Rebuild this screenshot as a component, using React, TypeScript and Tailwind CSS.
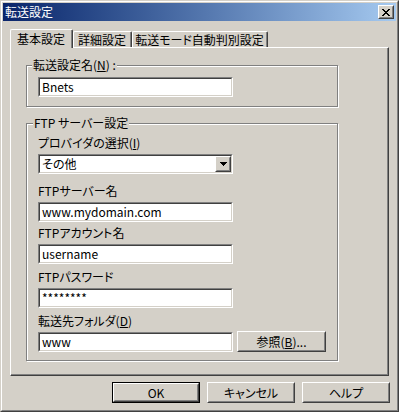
import React from "react";

const Sunken = ({ className = "", children }: { className?: string; children?: React.ReactNode }) => (
  <div className={"border border-t-[#808080] border-l-[#808080] border-r-white border-b-white " + className}>
    <div className="h-full w-full border border-t-[#404040] border-l-[#404040] border-r-[#d4d0c8] border-b-[#d4d0c8] bg-white flex items-center">
      {children}
    </div>
  </div>
);

const Raised = ({ className = "", children }: { className?: string; children?: React.ReactNode }) => (
  <div className={"border border-t-white border-l-white border-r-[#404040] border-b-[#404040] " + className}>
    <div className="h-full w-full border border-t-[#d4d0c8] border-l-[#d4d0c8] border-r-[#808080] border-b-[#808080] bg-[#d4d0c8] flex items-center justify-center">
      {children}
    </div>
  </div>
);

const TextBox = ({ value, className = "" }: { value: string; className?: string }) => (
  <Sunken className={"w-[195px] h-[20px] " + className}>
    <span className="pl-[2px] text-[12px] leading-[14px] text-black whitespace-nowrap">{value}</span>
  </Sunken>
);

const Label = ({ children, className = "" }: { children: React.ReactNode; className?: string }) => (
  <div className={"h-[14px] text-[12px] leading-[14px] text-black whitespace-nowrap " + className}>{children}</div>
);

const U = ({ children }: { children: React.ReactNode }) => <span className="underline underline-offset-[1px]">{children}</span>;

const CloseGlyph = () => (
  <svg width="8" height="7" viewBox="0 0 8 7" shapeRendering="crispEdges">
    <path
      fill="#000"
      d="M0 0h2v1H0zM6 0h2v1H6zM1 1h2v1H1zM5 1h2v1H5zM2 2h4v1H2zM3 3h2v1H3zM2 4h4v1H2zM1 5h2v1H1zM5 5h2v1H5zM0 6h2v1H0zM6 6h2v1H6z"
    />
  </svg>
);

const DownArrow = () => (
  <svg width="7" height="4" viewBox="0 0 7 4" shapeRendering="crispEdges">
    <path fill="#000" d="M0 0h7v1H0zM1 1h5v1H1zM2 2h3v1H2zM3 3h1v1H3z" />
  </svg>
);

const Button = ({ children, isDefault = false, className = "" }: { children: React.ReactNode; isDefault?: boolean; className?: string }) =>
  isDefault ? (
    <div className={"border border-black " + className}>
      <Raised className="w-full h-full">
        <span className="text-[12px] leading-[14px] text-black">{children}</span>
      </Raised>
    </div>
  ) : (
    <Raised className={className}>
      <span className="text-[12px] leading-[14px] text-black">{children}</span>
    </Raised>
  );

export default function App() {
  return (
    <div className="w-[399px] h-[412px] bg-[#d4d0c8] border border-t-[#d4d0c8] border-l-[#d4d0c8] border-r-[#404040] border-b-[#404040] font-['Noto_Sans_CJK_JP','Noto_Sans_CJK_SC',sans-serif] [font-feature-settings:'palt'] select-none">
      <div className="h-full border border-t-white border-l-white border-r-[#808080] border-b-[#808080] p-px flex flex-col">
        {/* Title bar */}
        <div className="h-[18px] flex items-center justify-between bg-gradient-to-r from-[#0a246a] to-[#a6caf0] pl-[2px] pr-[2px]">
          <span className="text-white text-[12px] leading-[14px]">転送設定</span>
          <Raised className="w-[16px] h-[14px]">
            <CloseGlyph />
          </Raised>
        </div>

        <div className="flex flex-col px-[7px] pt-[8px]">
          {/* Tabs */}
          <div className="flex items-end h-[18px]">
            <div className="relative z-10 w-[63px] h-[19px] mb-[-1px] bg-[#d4d0c8] border-l border-t border-r border-l-white border-t-white border-r-[#404040] rounded-t-[2px]">
              <div className="h-full border-r border-r-[#808080] flex items-center justify-center">
                <span className="text-[12px] leading-[14px] text-black">基本設定</span>
              </div>
            </div>
            <div className="w-[59px] h-[16px] bg-[#d4d0c8] border-l border-t border-r border-l-white border-t-white border-r-[#404040] rounded-t-[2px]">
              <div className="h-full border-r border-r-[#808080] flex items-center justify-center">
                <span className="text-[12px] leading-[14px] text-black">詳細設定</span>
              </div>
            </div>
            <div className="w-[136px] h-[16px] bg-[#d4d0c8] border-l border-t border-r border-l-white border-t-white border-r-[#404040] rounded-t-[2px]">
              <div className="h-full border-r border-r-[#808080] flex items-center justify-center">
                <span className="text-[12px] leading-[14px] text-black">転送モード自動判別設定</span>
              </div>
            </div>
          </div>

          {/* Panel */}
          <div className="w-[379px] h-[329px] border border-l-white border-t-white border-r-[#404040] border-b-[#404040]">
            <div className="h-full border-r border-b border-r-[#808080] border-b-[#808080] pl-[15px] pt-[17px] flex flex-col">
              {/* Group 1 */}
              <div className="relative w-[312px] h-[42px] border border-[#808080] shadow-[inset_1px_1px_0_#fff,1px_1px_0_#fff] pl-[11px] pt-[11px]">
                <div className="absolute left-[5px] top-[-8px] bg-[#d4d0c8] px-[1px]">
                  <Label>
                    転送設定名(<U>N</U>) :
                  </Label>
                </div>
                <TextBox value="Bnets" />
              </div>

              {/* Group 2 */}
              <div className="relative mt-[16px] w-[312px] h-[238px] border border-[#808080] shadow-[inset_1px_1px_0_#fff,1px_1px_0_#fff] pl-[11px] flex flex-col">
                <div className="absolute left-[6px] top-[-8px] bg-[#d4d0c8] px-[1px]">
                  <Label>FTP サーバー設定</Label>
                </div>
                <Label className="mt-[12px]">
                  プロバイダの選択(<U>I</U>)
                </Label>
                <Sunken className="mt-[4px] w-[195px] h-[20px]">
                  <span className="flex-1 pl-[2px] text-[12px] leading-[14px] text-black">その他</span>
                  <Raised className="w-[16px] h-full">
                    <DownArrow />
                  </Raised>
                </Sunken>

                <Label className="mt-[10px]">FTPサーバー名</Label>
                <TextBox className="mt-[4px]" value="www.mydomain.com" />

                <Label className="mt-[4px]">FTPアカウント名</Label>
                <TextBox className="mt-[4px]" value="username" />

                <Label className="mt-[6px]">FTPパスワード</Label>
                <TextBox className="mt-[4px]" value="********" />

                <Label className="mt-[6px]">
                  転送先フォルダ(<U>D</U>)
                </Label>
                <div className="mt-[3px] flex items-end h-[21px]">
                  <TextBox value="www" />
                  <Button className="ml-[4px] w-[89px] h-[21px]">
                    参照(<U>B</U>)...
                  </Button>
                </div>
              </div>
            </div>
          </div>
        </div>

        {/* Buttons */}
        <div className="mt-[6px] flex justify-end gap-[7px] pr-[6px]">
          <Button isDefault className="w-[88px] h-[21px]">
            OK
          </Button>
          <Button className="w-[88px] h-[21px]">キャンセル</Button>
          <Button className="w-[88px] h-[21px]">ヘルプ</Button>
        </div>
      </div>
    </div>
  );
}
